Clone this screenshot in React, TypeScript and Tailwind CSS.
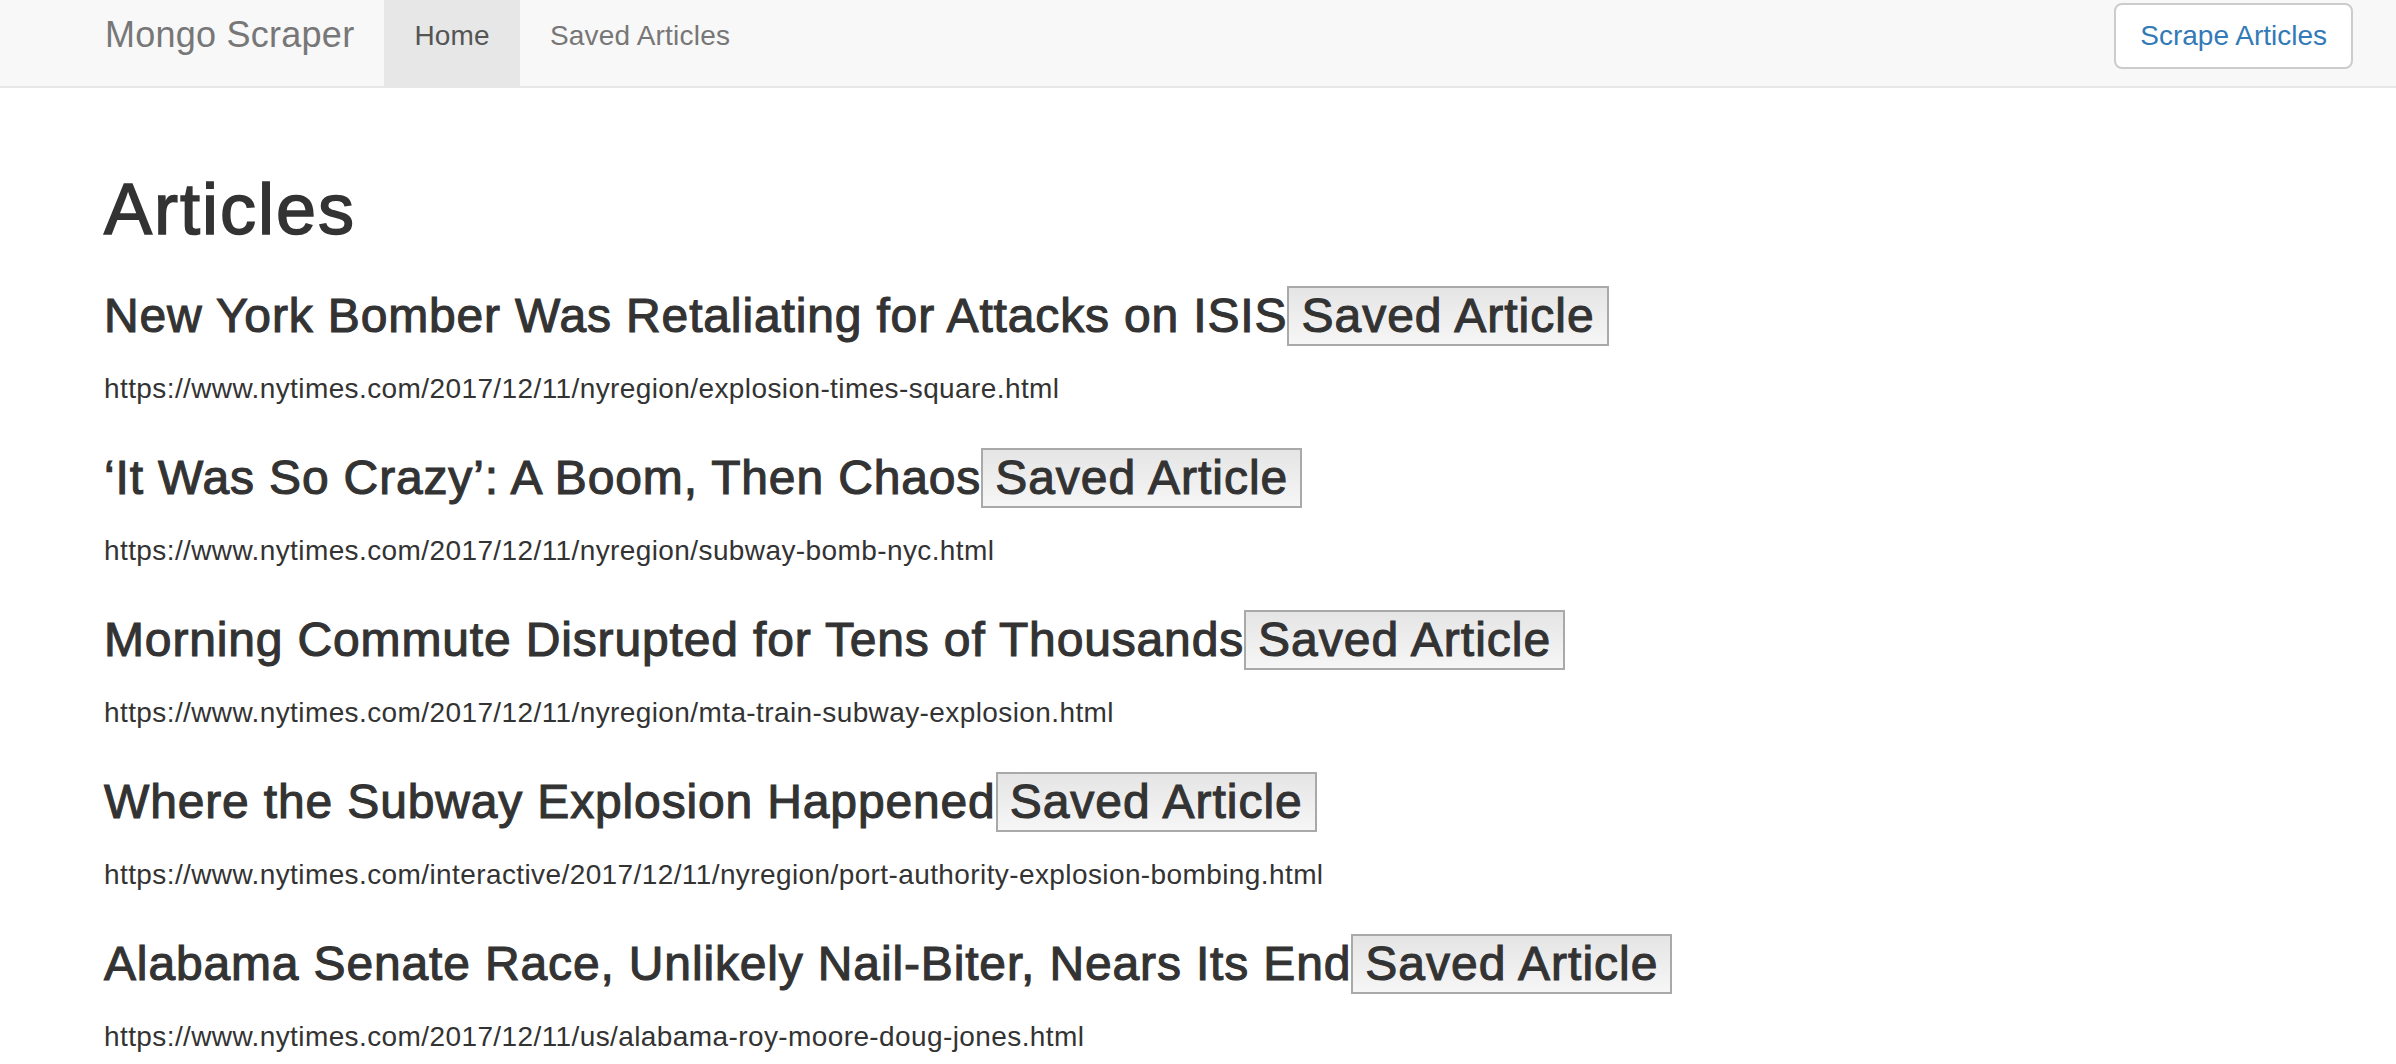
import { FC } from "react";

interface Article {
  title: string;
  link: string;
}

const articles: Article[] = [
  {
    title: "New York Bomber Was Retaliating for Attacks on ISIS",
    link: "https://www.nytimes.com/2017/12/11/nyregion/explosion-times-square.html",
  },
  {
    title: "\u2018It Was So Crazy\u2019: A Boom, Then Chaos",
    link: "https://www.nytimes.com/2017/12/11/nyregion/subway-bomb-nyc.html",
  },
  {
    title: "Morning Commute Disrupted for Tens of Thousands",
    link: "https://www.nytimes.com/2017/12/11/nyregion/mta-train-subway-explosion.html",
  },
  {
    title: "Where the Subway Explosion Happened",
    link: "https://www.nytimes.com/interactive/2017/12/11/nyregion/port-authority-explosion-bombing.html",
  },
  {
    title: "Alabama Senate Race, Unlikely Nail-Biter, Nears Its End",
    link: "https://www.nytimes.com/2017/12/11/us/alabama-roy-moore-doug-jones.html",
  },
];

const Navbar: FC = () => {
  return (
    <nav className="flex h-[88px] bg-[#f8f8f8] border-b-2 border-[#e7e7e7] pl-[75px] pr-[43px]">
      <a className="px-[30px] pt-[15px] text-[36px] leading-[40px] tracking-[0.25px] text-[#777]">
        Mongo Scraper
      </a>
      <ul className="flex">
        <li className="bg-[#e7e7e7] px-[30px] pt-[16px] text-[28px] leading-[40px] tracking-[0.2px] text-[#555]">
          Home
        </li>
        <li className="px-[30px] pt-[16px] text-[28px] leading-[40px] tracking-[0.2px] text-[#777]">
          Saved Articles
        </li>
      </ul>
      <div className="flex-1" />
      <div className="pt-[3px]">
        <button className="h-[66px] px-[24px] bg-white border-2 border-[#ccc] rounded-[8px] text-[28px] leading-[40px] text-[#337ab7]">
          Scrape Articles
        </button>
      </div>
    </nav>
  );
};

const App: FC = () => {
  return (
    <div
      className="min-h-screen bg-white text-[#333]"
      style={{ fontFamily: '"Liberation Sans", Arial, sans-serif' }}
    >
      <Navbar />
      <main className="pl-[104px]">
        <h1 className="mt-[82px] text-[72px] leading-[79px] font-normal tracking-[2px] [-webkit-text-stroke:1.6px_#333]">
          Articles
        </h1>
        {articles.map((item, i) => (
          <div key={i} className={i === 0 ? "mt-[37px]" : "mt-[39px]"}>
            <h3 className="h-[60px] text-[48px] leading-[60px] tracking-[0.85px] whitespace-nowrap [-webkit-text-stroke:1.1px_#333]">
              {item.title}
              <button className="inline-block h-[60px] align-top px-[12px] py-[2px] border-2 border-[#a9a9a9] bg-linear-to-b from-[#e5e5e5] to-[#f6f6f6] text-[48px] leading-[52px] tracking-[1px] text-[#333] [-webkit-text-stroke:1.1px_#333]">
                Saved Article
              </button>
            </h3>
            <p className="mt-[23px] text-[28px] leading-[40px] tracking-[0.4px]">
              {item.link}
            </p>
          </div>
        ))}
      </main>
    </div>
  );
};

export default App;
